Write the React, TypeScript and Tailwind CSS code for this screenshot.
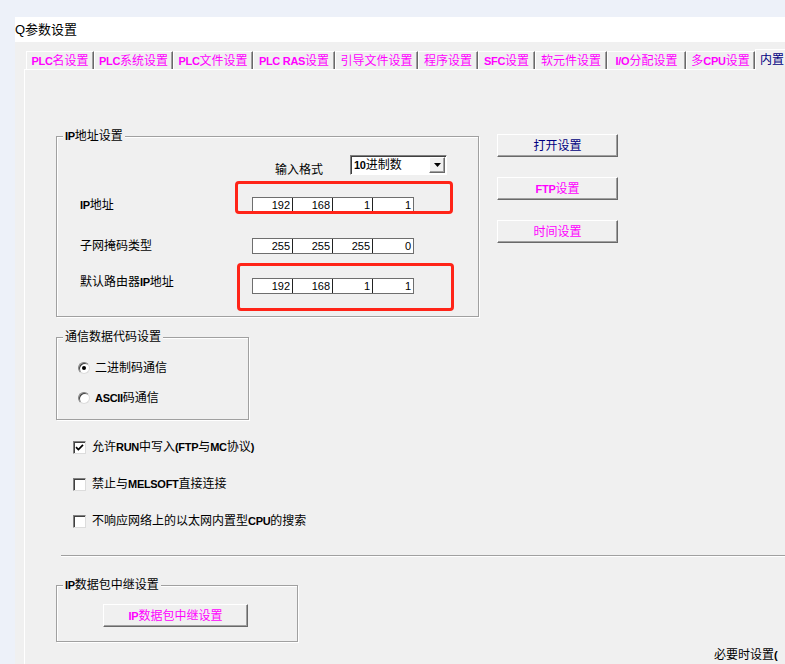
import React from "react";

// Latin runs in the bitmap UI font are bold
function L({ children }: { children: React.ReactNode }) {
  return <b className="text-[11px] font-bold tracking-[-0.3px]">{children}</b>;
}

const tabs: { w: string; label: React.ReactNode }[] = [
  { w: "w-[68px]", label: <><L>PLC</L>名设置</> },
  { w: "w-[79px]", label: <><L>PLC</L>系统设置</> },
  { w: "w-[80px]", label: <><L>PLC</L>文件设置</> },
  { w: "w-[82px]", label: <><L>PLC RAS</L>设置</> },
  { w: "w-[83px]", label: <>引导文件设置</> },
  { w: "w-[60px]", label: <>程序设置</> },
  { w: "w-[57px]", label: <><L>SFC</L>设置</> },
  { w: "w-[72px]", label: <>软元件设置</> },
  { w: "w-[79px]", label: <><L>I/O</L>分配设置</> },
  { w: "w-[69px]", label: <>多<L>CPU</L>设置</> },
];

function Legend({ children }: { children: React.ReactNode }) {
  return (
    <span className="absolute left-[6px] top-[-9px] bg-[#f0f0f0] px-[2px] leading-[16px] whitespace-nowrap">
      {children}
    </span>
  );
}

const groupCls =
  "relative border border-[#a0a0a0] shadow-[inset_1px_1px_0_#fff,1px_1px_0_#fff]";

const btnCls =
  "flex items-center justify-center border border-t-white border-l-white border-r-[#696969] border-b-[#696969] bg-[#f0f0f0] shadow-[inset_-1px_-1px_0_#a0a0a0] leading-[16px]";

function IpField({ values }: { values: string[] }) {
  return (
    <div className="flex h-[16px] border border-[#6e6e6e] bg-white">
      {values.map((v, i) => (
        <div
          key={i}
          className={
            "flex w-[40px] items-center justify-end pr-[2px] text-[11px] leading-[14px] " +
            (i < 3 ? "border-r border-r-[#222]" : "")
          }
        >
          {v}
        </div>
      ))}
    </div>
  );
}

function Radio({ checked }: { checked?: boolean }) {
  return (
    <span className="flex h-[12px] w-[12px] items-center justify-center rounded-full border border-t-[#808080] border-l-[#808080] border-r-[#dcdcdc] border-b-[#dcdcdc] bg-white shadow-[inset_1px_1px_0_#404040]">
      {checked && <span className="h-[4px] w-[4px] rounded-full bg-black" />}
    </span>
  );
}

function Check({ checked }: { checked?: boolean }) {
  return (
    <span className="flex h-[13px] w-[13px] items-center justify-center border border-t-[#808080] border-l-[#808080] border-r-[#dcdcdc] border-b-[#dcdcdc] bg-white shadow-[inset_1px_1px_0_#404040]">
      {checked && (
        <svg width="9" height="9" viewBox="0 0 9 9">
          <path d="M1 4.2 L3.4 6.6 L8 1.8" fill="none" stroke="#000" strokeWidth="1.7" />
        </svg>
      )}
    </span>
  );
}

export default function App() {
  return (
    <div className="h-[664px] w-[785px] overflow-hidden bg-[#edf1f9] pl-[15px] pt-[17px] font-['Liberation_Sans','Noto_Sans_CJK_SC',sans-serif] text-[12px] text-black">
      <div className="flex h-full flex-col bg-[#f0f0f0]">
        <div className="flex h-[25px] items-center bg-white text-[13px] leading-[16px]">Q参数设置</div>

        <div className="flex flex-1 flex-col pl-[9px] pt-[7px]">
          {/* tabs */}
          <div className="flex h-[20px] items-end pl-[2px]">
            {tabs.map((t, i) => (
              <div
                key={i}
                className={
                  t.w +
                  " flex h-[18px] shrink-0 items-center justify-center whitespace-nowrap border-t border-l border-t-white border-l-white border-r border-r-[#696969] shadow-[inset_-1px_0_0_#a0a0a0] leading-[16px] text-[#ff00ff]"
                }
              >
                {t.label}
              </div>
            ))}
            <div className="relative z-10 -mb-px flex h-[21px] w-[60px] shrink-0 items-center whitespace-nowrap border-t border-l border-white bg-[#f0f0f0] pl-[4px] leading-[16px] text-[#000080]">
              内置
            </div>
          </div>

          {/* panel */}
          <div className="flex flex-1 flex-col border-t border-l border-white pl-[31px]">
            <div className="mt-[64px] flex items-start">
              {/* IP地址设置 */}
              <div className={groupCls + " mt-[2px] h-[181px] w-[423px]"}>
                <Legend>
                  <L>IP</L>地址设置
                </Legend>
                <div className="flex items-start pl-[218px] pt-[18px]">
                  <span className="mt-[7px] leading-[16px]">输入格式</span>
                  <div className="ml-[27px] flex h-[20px] w-[97px] items-center border border-t-[#808080] border-l-[#808080] border-r-white border-b-white bg-white shadow-[inset_1px_1px_0_#404040]">
                    <span className="flex-1 pl-[3px] leading-[16px]">
                      <L>10</L>进制数
                    </span>
                    <span className={btnCls + " mr-px h-[16px] w-[16px]"}>
                      <svg width="7" height="4" viewBox="0 0 7 4">
                        <path d="M0 0 H7 L3.5 4 Z" fill="#000" />
                      </svg>
                    </span>
                  </div>
                </div>

                <div className="mt-[19px] flex h-[16px] items-center pl-[23px]">
                  <span className="w-[172px] leading-[16px]">
                    <L>IP</L>地址
                  </span>
                  <IpField values={["192", "168", "1", "1"]} />
                </div>

                <div className="mt-[25px] flex h-[16px] items-center pl-[23px]">
                  <span className="w-[172px] leading-[16px]">子网掩码类型</span>
                  <IpField values={["255", "255", "255", "0"]} />
                </div>

                <div className="mt-[24px] flex h-[16px] items-start pl-[23px]">
                  <span className="-mt-[4px] w-[172px] leading-[16px]">
                    默认路由器<L>IP</L>地址
                  </span>
                  <IpField values={["192", "168", "1", "1"]} />
                </div>

                {/* red annotation boxes */}
                <div className="absolute left-[178px] top-[44px] h-[33px] w-[218px] rounded-[4px] border-[3px] border-[#ff2418]" />
                <div className="absolute left-[180px] top-[126px] h-[48px] w-[217px] rounded-[4px] border-[3px] border-[#ff2418]" />
              </div>

              {/* buttons */}
              <div className="ml-[18px] flex flex-col gap-[20px]">
                <div className={btnCls + " h-[23px] w-[121px] text-[#000080]"}>打开设置</div>
                <div className={btnCls + " h-[23px] w-[121px] text-[#ff00ff]"}>
                  <L>FTP</L>设置
                </div>
                <div className={btnCls + " h-[23px] w-[121px] text-[#ff00ff]"}>时间设置</div>
              </div>
            </div>

            {/* 通信数据代码设置 */}
            <div className={groupCls + " mt-[20px] h-[83px] w-[193px]"}>
              <Legend>通信数据代码设置</Legend>
              <div className="mt-[22px] flex h-[16px] items-center gap-[5px] pl-[21px]">
                <Radio checked />
                <span className="leading-[16px]">二进制码通信</span>
              </div>
              <div className="mt-[14px] flex h-[16px] items-center gap-[5px] pl-[21px]">
                <Radio />
                <span className="leading-[16px]">
                  <L>ASCII</L>码通信
                </span>
              </div>
            </div>

            <div className="mt-[19px] flex h-[16px] items-center gap-[6px] pl-[17px]">
              <Check checked />
              <span className="leading-[16px]">
                允许<L>RUN</L>中写入<L>(FTP</L>与<L>MC</L>协议<L>)</L>
              </span>
            </div>
            <div className="mt-[21px] flex h-[16px] items-center gap-[6px] pl-[17px]">
              <Check />
              <span className="leading-[16px]">
                禁止与<L>MELSOFT</L>直接连接
              </span>
            </div>
            <div className="mt-[21px] flex h-[16px] items-center gap-[6px] pl-[17px]">
              <Check />
              <span className="leading-[16px]">
                不响应网络上的以太网内置型<L>CPU</L>的搜索
              </span>
            </div>

            <div className="ml-[5px] mt-[26px] h-[2px] border-t border-t-[#a0a0a0] border-b border-b-white" />

            {/* IP数据包中继设置 */}
            <div className={groupCls + " mt-[28px] h-[57px] w-[242px]"}>
              <Legend>
                <L>IP</L>数据包中继设置
              </Legend>
              <div className={btnCls + " ml-[46px] mt-[18px] h-[23px] w-[145px] text-[#ff00ff]"}>
                <L>IP</L>数据包中继设置
              </div>
            </div>

            <div className="ml-[658px] mt-[5px] whitespace-nowrap leading-[16px]">
              必要时设置<L>(</L>
            </div>
          </div>
        </div>
      </div>
    </div>
  );
}
